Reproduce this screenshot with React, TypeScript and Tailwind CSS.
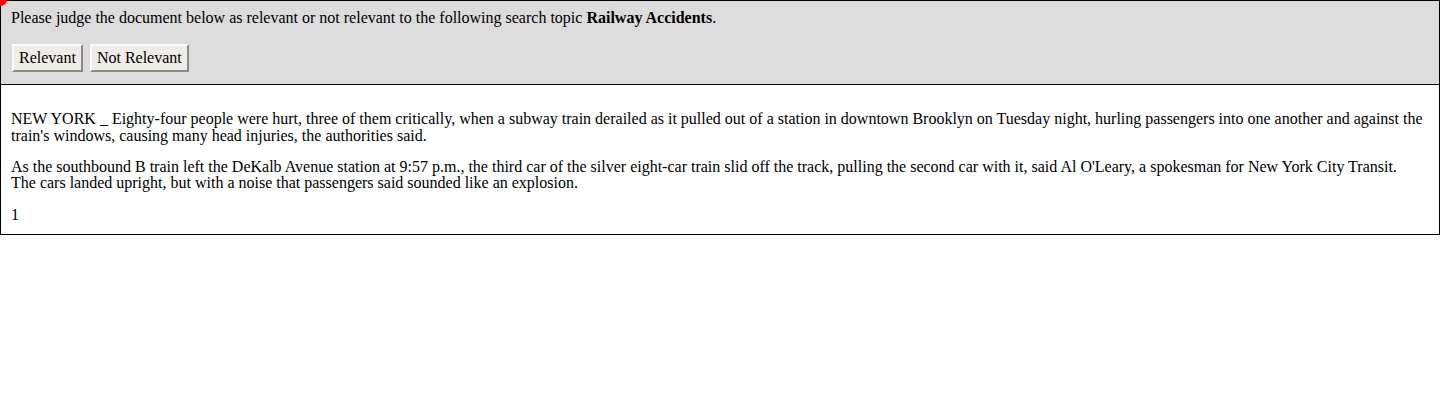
import React from 'react';

const JudgeButton = ({ label }: { label: string }) => (
  <button
    type="button"
    className="h-[28px] px-[5px] bg-[#efece8] text-black text-[16px] leading-[16px] border-2 border-t-[#fbfbfb] border-l-[#fbfbfb] border-b-[#8a8a8a] border-r-[#8a8a8a] font-['Liberation_Serif',serif]"
  >
    {label}
  </button>
);

export default function App() {
  return (
    <div className="relative bg-white text-black font-['Liberation_Serif',serif] text-[16px] leading-[16px]">
      <div className="border border-black">
        {/* Верхняя панель с кнопками */}
        <div className="bg-[#dcdcdc] border-b border-black px-[10px] pt-[9px] pb-[12px]">
          <p>
            Please judge the document below as relevant or not relevant to the following search topic{' '}
            <b>Railway Accidents</b>.
          </p>
          <div className="flex gap-[7px] mt-[18px] pl-[1px]">
            <JudgeButton label="Relevant" />
            <JudgeButton label="Not Relevant" />
          </div>
        </div>

        {/* Текст документа */}
        <div className="px-[10px] pt-[25px] pb-[11px]">
          <p className="leading-[17px]">
            NEW YORK _ Eighty-four people were hurt, three of them critically, when a subway train derailed as it pulled out of a station in downtown Brooklyn on Tuesday night, hurling passengers into one another and against the train's windows, causing many head injuries, the authorities said.
          </p>
          <p className="mt-[15px] leading-[16px]">
            As the southbound B train left the DeKalb Avenue station at 9:57 p.m., the third car of the silver eight-car train slid off the track, pulling the second car with it, said Al O'Leary, a spokesman for New York City Transit.
            <br />
            The cars landed upright, but with a noise that passengers said sounded like an explosion.
          </p>
          <p className="mt-[16px]">1</p>
        </div>
      </div>
      <div className="absolute -left-[7px] -top-[7px] w-[14px] h-[13px] rounded-full bg-[#ff0000]" />
    </div>
  );
}
